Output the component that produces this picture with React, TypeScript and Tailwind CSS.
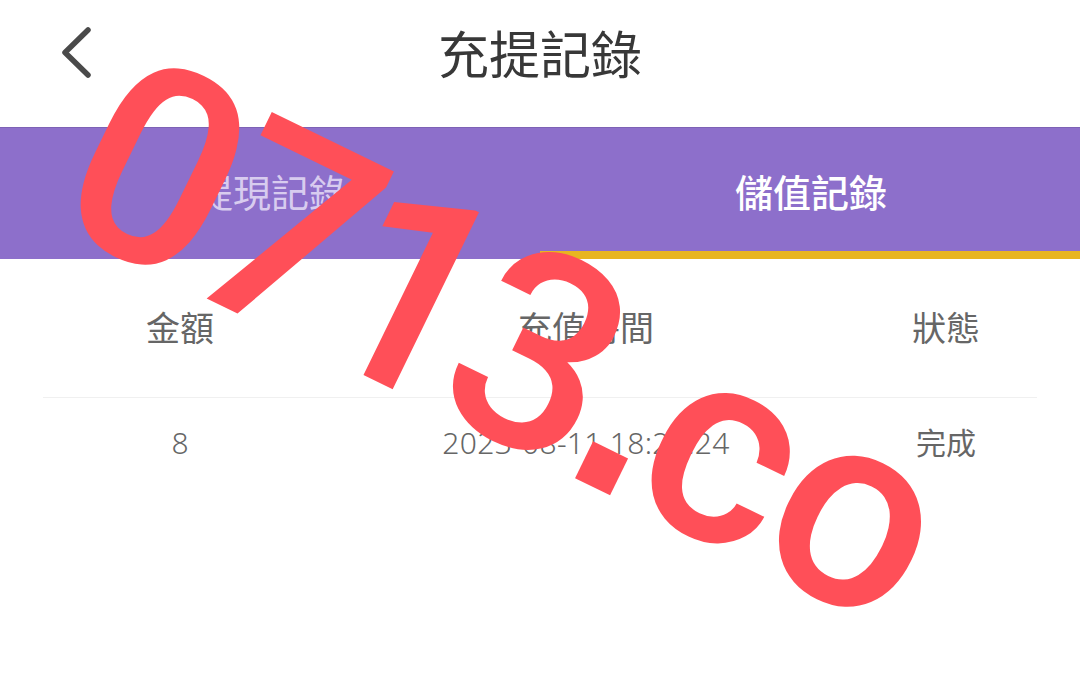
const cjk = "font-['Roboto','Noto_Sans_CJK_TC',sans-serif]";

export default function App() {
  return (
    <div className={`relative h-[687px] w-[1080px] overflow-hidden bg-white ${cjk}`}>
      <header className="flex h-[127px] items-start pl-[60px]">
        <svg width="34" height="56" viewBox="0 0 34 56" className="mt-[26px] shrink-0">
          <path d="M28 4 L5 26.500 L28 49" fill="none" stroke="#4a4a4a" strokeWidth="5.500" strokeLinecap="round" strokeLinejoin="round" />
        </svg>
        <h1 className="ml-[344px] mt-[23px] text-[51px] leading-[68px] font-normal text-[#383838]">充提記錄</h1>
      </header>

      <nav className="grid h-[132px] grid-cols-2 border-t border-[#7d62b5] bg-[#8d6fcb]">
        <div className="flex items-start justify-center pt-[41px] pl-[2px] text-[38px] leading-[50px] text-[#d8ccef]">提現記錄</div>
        <div className="flex items-start justify-center border-b-[8px] border-[#e8b520] pt-[41px] pl-[2px] text-[38px] leading-[50px] font-medium text-white">儲值記錄</div>
      </nav>

      <section className="px-[43px]">
        <div className="grid h-[139px] grid-cols-[274px_1fr_182px] border-b border-[#f0f0f0] pt-[47px] text-center text-[34px] leading-[46px] text-[#666666]">
          <span>金額</span>
          <span>充值時間</span>
          <span>狀態</span>
        </div>
        <div className="grid grid-cols-[274px_1fr_182px] pt-[25px] text-center font-['Noto_Sans','Noto_Sans_CJK_TC',sans-serif] text-[30px] leading-[40px] font-light text-[#666666]">
          <span>8</span>
          <span className="tracking-[0.3px]">2023-08-11 18:26:24</span>
          <span className="font-normal">完成</span>
        </div>
      </section>

      {/* watermark, glyph gaps tuned one by one */}
      <div className="absolute left-[88px] top-[-16px] origin-[0_50%] rotate-[26deg] whitespace-nowrap font-['Roboto',sans-serif] text-[276px] leading-[300px] font-medium tracking-[-11px] text-[#ff4f58]">
        0<span className="tracking-[-21px]">7</span>
        <span className="tracking-[-16px]">1</span>
        <span className="tracking-[-10px]">3</span>
        <span className="font-['Liberation_Sans',sans-serif] font-bold tracking-[-7px]">.</span>
        <span className="tracking-[-3px]">c</span>o
      </div>
    </div>
  );
}
